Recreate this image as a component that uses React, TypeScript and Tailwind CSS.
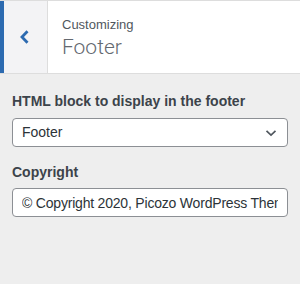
import React from "react";

export default function App() {
  return (
    <div
      className="w-[300px] h-[284px] bg-[#eeeeee] overflow-hidden"
      style={{ fontFamily: '"Liberation Sans", Arial, sans-serif' }}
    >
      <div className="flex h-[74px] bg-white border-t border-b border-[#dddddd]">
        <div className="w-[48px] h-full flex items-center justify-center bg-[#f3f3f5] border-l-4 border-l-[#2c6ab0] border-r border-r-[#dddddd]">
          <svg width="12" height="16" viewBox="0 0 12 16" className="-ml-[4px]">
            <path d="M9.5 2.3 L4 8 L9.5 13.7" fill="none" stroke="#2c6ab0" strokeWidth="2.8" />
          </svg>
        </div>
        <div className="pl-[14px] pt-[16px] flex flex-col">
          <div className="text-[13px] leading-[16px] text-[#50575e]">Customizing</div>
          <div
            className="mt-[2px] text-[21px] leading-[24px] text-[#646970] font-light"
            style={{ fontFamily: 'Roboto, "Liberation Sans", sans-serif' }}
          >
            Footer
          </div>
        </div>
      </div>
      <div className="px-[12px] pt-[18px] flex flex-col">
        <div className="text-[14px] leading-[18px] font-bold text-[#3c434a]">HTML block to display in the footer</div>
        <div className="mt-[8px] h-[29px] flex items-center justify-between bg-white border border-[#8c8f94] rounded-[4px] pl-[9px] pr-[10px]">
          <span className="text-[14px] text-[#2c3338]">Footer</span>
          <svg width="12" height="8" viewBox="0 0 12 8">
            <path d="M1.5 1.8 L6 6 L10.5 1.8" fill="none" stroke="#50575e" strokeWidth="1.7" />
          </svg>
        </div>
        <div className="mt-[16px] text-[14px] leading-[18px] font-bold text-[#3c434a]">Copyright</div>
        <input
          readOnly
          value="© Copyright 2020, Picozo WordPress Theme"
          className="mt-[7px] h-[29px] w-full bg-white border border-[#8c8f94] rounded-[4px] px-[9px] text-[14px] tracking-[-0.2px] text-[#2c3338] outline-none"
          style={{ fontFamily: '"Liberation Sans", Arial, sans-serif' }}
        />
      </div>
    </div>
  );
}
